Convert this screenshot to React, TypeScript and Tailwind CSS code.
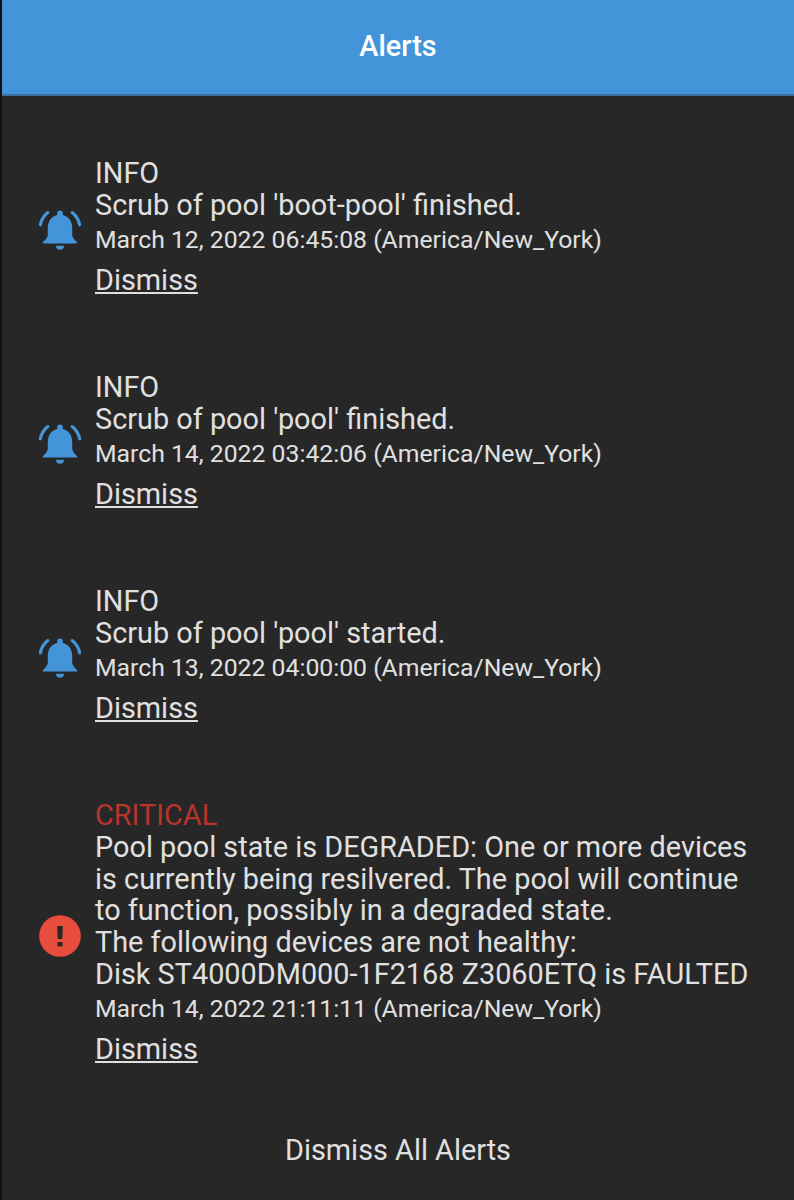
const font = { fontFamily: "Roboto, sans-serif" };

function Bell() {
  return (
    <svg viewBox="0 0 44 44" className="w-[44px] h-[44px]" fill="#4394d8">
      <path d="M22 2.500a2.800 2.800 0 0 1 2.800 2.800v1.600c6 1.400 9.400 6.500 9.400 12.900v6.400c0 2.500 1.500 5 4.800 7.800.6.600.2 1.500-.6 1.500H5.600c-.8 0-1.200-.9-.6-1.500 3.300-2.800 4.800-5.300 4.800-7.800v-6.400c0-6.400 3.400-11.500 9.400-12.900V5.300A2.800 2.800 0 0 1 22 2.500z" />
      <path d="M18 37.800h8a4 4 0 0 1-8 0z" />
      <path d="M2.400 16.800Q3.800 9.500 9.800 4.600" fill="none" stroke="#4394d8" strokeWidth="3.200" strokeLinecap="round" />
      <path d="M41.600 16.800Q40.200 9.500 34.200 4.600" fill="none" stroke="#4394d8" strokeWidth="3.200" strokeLinecap="round" />
    </svg>
  );
}

function Critical() {
  return (
    <svg viewBox="0 0 44 44" className="w-[44px] h-[44px]">
      <circle cx="22" cy="22" r="20.800" fill="#e74c3c" />
      <path d="M19.200 12h5.600l-.5 13h-4.600z" fill="#272727" />
      <rect x="19.500" y="28" width="5" height="4.500" fill="#272727" />
    </svg>
  );
}

type AlertProps = { level: string; critical?: boolean; lines: string[]; date: string };

function Alert({ level, critical, lines, date }: AlertProps) {
  return (
    <div className="flex items-center pl-[35.5px] pr-[30px] py-[35px]">
      <div className="w-[57.5px] shrink-0">{critical ? <Critical /> : <Bell />}</div>
      <div className="min-w-0 flex-1">
        <div className={`text-[28.85px] leading-[31.8px] ${critical ? "text-[#b9342c]" : "text-[#e0e0e0]"}`}>{level}</div>
        {lines.map((line) => (
          <div key={line} className="text-[28.85px] leading-[31.8px] text-[#e0e0e0] whitespace-nowrap">{line}</div>
        ))}
        <div className="text-[24.75px] leading-[36px] text-[#e0e0e0] whitespace-nowrap">{date}</div>
        <a className="block text-[28.85px] leading-[44.4px] text-[#e0e0e0] underline decoration-2 underline-offset-2">Dismiss</a>
      </div>
    </div>
  );
}

export default function App() {
  return (
    <div style={font} className="w-[794px] h-[1200px] overflow-hidden bg-[#272727] border-l-2 border-[#111111] flex flex-col">
      <header className="h-[96px] shrink-0 bg-[#4394d8] border-b-2 border-[#3a6f9c] flex items-center justify-center text-white text-[28.85px] font-medium">
        Alerts
      </header>
      <main className="pt-[27px]">
        <Alert level="INFO" lines={["Scrub of pool 'boot-pool' finished."]} date="March 12, 2022 06:45:08 (America/New_York)" />
        <Alert level="INFO" lines={["Scrub of pool 'pool' finished."]} date="March 14, 2022 03:42:06 (America/New_York)" />
        <Alert level="INFO" lines={["Scrub of pool 'pool' started."]} date="March 13, 2022 04:00:00 (America/New_York)" />
        <Alert
          critical
          level="CRITICAL"
          lines={[
            "Pool pool state is DEGRADED: One or more devices",
            "is currently being resilvered. The pool will continue",
            "to function, possibly in a degraded state.",
            "The following devices are not healthy:",
            "Disk ST4000DM000-1F2168 Z3060ETQ is FAULTED",
          ]}
          date="March 14, 2022 21:11:11 (America/New_York)"
        />
      </main>
      <div className="text-center text-[28.85px] text-[#e0e0e0] mt-[23px]">Dismiss All Alerts</div>
    </div>
  );
}
